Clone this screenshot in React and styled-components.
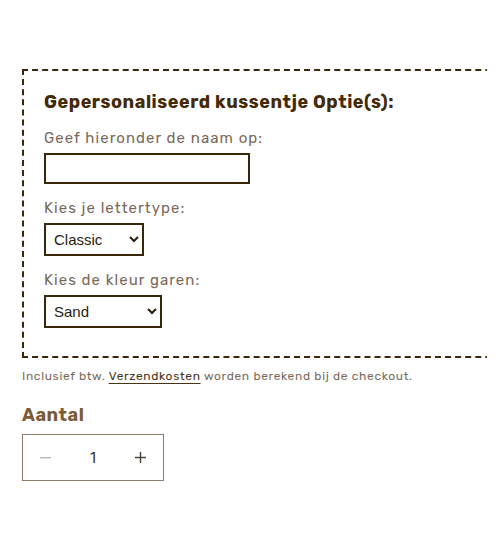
import styled, { createGlobalStyle } from "styled-components";

const GlobalStyle = createGlobalStyle`
  body {
    margin: 0;
    background: #ffffff;
    font-family: Rubik, Inter, "Open Sans", sans-serif;
  }
`;

const Page = styled.div`
  padding: 69px 13px 0 22px;
  width: 500px;
  box-sizing: border-box;
`;

const Clip = styled.div`
  overflow: hidden;
`;

const OptionsBox = styled.div`
  width: 560px;
  box-sizing: border-box;
  border: 2px dashed #3a2608;
  padding: 20px 20px 28px;
`;

const Title = styled.div`
  font-weight: 700;
  font-size: 18px;
  line-height: 22px;
  color: #452a08;
  letter-spacing: 0.03em;
  margin-bottom: 15px;
`;

const Field = styled.div`
  display: flex;
  flex-direction: column;
  align-items: flex-start;
  margin-top: ${(p) => (p.$first ? "0" : "14px")};
`;

const Label = styled.label`
  font-size: 15px;
  line-height: 20px;
  color: #7b6a59;
  letter-spacing: 0.07em;
  margin-bottom: 5px;
`;

const TextInput = styled.input`
  width: 206px;
  height: 31px;
  box-sizing: border-box;
  border: 2px solid #3a2608;
  border-radius: 0;
  padding: 0 8px;
  font-family: "Liberation Sans", Arial, sans-serif;
  font-size: 15px;
  outline: none;
`;

const Select = styled.select`
  width: ${(p) => p.$width}px;
  height: 33px;
  box-sizing: border-box;
  border: 2px solid #3a2608;
  border-radius: 0;
  padding: 0 4px;
  background: #ffffff;
  color: #2a1d0c;
  font-family: "Liberation Sans", Arial, sans-serif;
  font-size: 15px;
  outline: none;
`;

const Note = styled.p`
  margin: 9px 0 0;
  font-size: 12px;
  line-height: 18px;
  color: #7b6a59;
  letter-spacing: 0.055em;
  a {
    color: #4a3418;
    text-decoration: underline;
    text-underline-offset: 3px;
  }
`;

const QtyTitle = styled.div`
  margin-top: 19px;
  font-weight: 700;
  font-size: 18px;
  line-height: 22px;
  color: #7a5c38;
  letter-spacing: 0.03em;
`;

const Quantity = styled.div`
  margin-top: 8px;
  width: 142px;
  height: 47px;
  box-sizing: border-box;
  border: 1px solid #8c7b67;
  display: grid;
  grid-template-columns: 45px 1fr 45px;
  align-items: center;
`;

const QtyButton = styled.button`
  height: 100%;
  border: none;
  background: transparent;
  display: flex;
  align-items: center;
  justify-content: center;
  padding: 0;
  color: ${(p) => (p.$muted ? "#c0b8b0" : "#4a4038")};
  cursor: pointer;
`;

const QtyValue = styled.div`
  text-align: center;
  font-size: 15px;
  color: #3a3128;
  font-family: Inter, "Open Sans", sans-serif;
`;

function Minus() {
  return (
    <svg width="11" height="2" viewBox="0 0 11 2">
      <rect width="11" height="1.4" fill="currentColor" />
    </svg>
  );
}

function Plus() {
  return (
    <svg width="11" height="11" viewBox="0 0 11 11">
      <rect x="0" y="4.8" width="11" height="1.4" fill="currentColor" />
      <rect x="4.8" y="0" width="1.4" height="11" fill="currentColor" />
    </svg>
  );
}

export default function App() {
  return (
    <>
      <GlobalStyle />
      <Page>
        <Clip>
          <OptionsBox>
            <Title>Gepersonaliseerd kussentje Optie(s):</Title>
            <Field $first>
              <Label>Geef hieronder de naam op:</Label>
              <TextInput type="text" />
            </Field>
            <Field>
              <Label>Kies je lettertype:</Label>
              <Select $width={100} defaultValue="Classic">
                <option>Classic</option>
                <option>Modern</option>
              </Select>
            </Field>
            <Field>
              <Label>Kies de kleur garen:</Label>
              <Select $width={118} defaultValue="Sand">
                <option>Sand</option>
                <option>Bruin</option>
              </Select>
            </Field>
          </OptionsBox>
        </Clip>
        <Note>
          Inclusief btw. <a href="#">Verzendkosten</a> worden berekend bij de
          checkout.
        </Note>
        <QtyTitle>Aantal</QtyTitle>
        <Quantity>
          <QtyButton $muted>
            <Minus />
          </QtyButton>
          <QtyValue>1</QtyValue>
          <QtyButton>
            <Plus />
          </QtyButton>
        </Quantity>
      </Page>
    </>
  );
}
